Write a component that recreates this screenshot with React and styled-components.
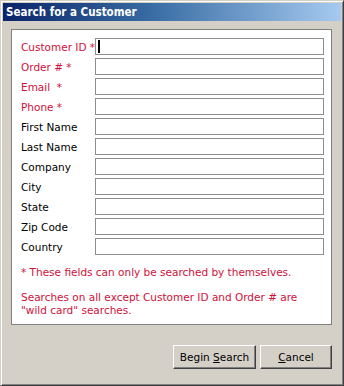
import React from "react";
import styled, { createGlobalStyle } from "styled-components";

const GlobalStyle = createGlobalStyle`
  html, body { margin: 0; padding: 0; background: #d4d0c8; }
  body { font-family: "DejaVu Sans", Verdana, sans-serif; }
`;

const Window = styled.div`
  box-sizing: border-box;
  width: 344px;
  height: 386px;
  background: #d4d0c8;
  border: 1px solid;
  border-color: #d4d0c8 #404040 #404040 #d4d0c8;
  box-shadow: inset 1px 1px 0 #ffffff, inset -1px -1px 0 #808080;
  padding: 2px;
  display: flex;
  flex-direction: column;
`;

const TitleBar = styled.div`
  height: 18px;
  display: flex;
  align-items: center;
  padding-left: 3px;
  background: linear-gradient(to right, #0a246a 0%, #3a6ea5 45%, #a6caf0 100%);
  color: #ffffff;
  font-family: "DejaVu Sans Condensed", "DejaVu Sans", sans-serif;
  font-stretch: condensed;
  font-weight: bold;
  font-size: 11.5px;
`;

const Body = styled.div`
  flex: 1;
  display: flex;
  flex-direction: column;
  padding: 8px 9px 0 8px;
`;

const Panel = styled.div`
  box-sizing: border-box;
  height: 296px;
  background: #ffffff;
  border: 1px solid #808080;
  padding: 8px 7px 0 9px;
  display: flex;
  flex-direction: column;
`;

const FieldList = styled.div`
  display: flex;
  flex-direction: column;
  gap: 3px;
`;

const Row = styled.div`
  display: grid;
  grid-template-columns: 74px 1fr;
  align-items: center;
  height: 17px;
`;

const Label = styled.span`
  font-size: 10.5px;
  color: ${(p) => (p.required ? "#d0103a" : "#000000")};
  white-space: pre;
`;

const InputBox = styled.div`
  position: relative;
  box-sizing: border-box;
  height: 17px;
  border: 1px solid #8c8c8c;
  background: #ffffff;
`;

const Caret = styled.span`
  position: absolute;
  left: 2px;
  top: 1px;
  width: 2px;
  height: 13px;
  background: #000000;
`;

const Note = styled.p`
  margin: ${(p) => p.top}px 0 0 0;
  font-size: 10.5px;
  line-height: 13px;
  color: #d0103a;
`;

const ButtonBar = styled.div`
  display: flex;
  justify-content: flex-end;
  gap: 4px;
  padding-top: 20px;
`;

const Button = styled.button`
  box-sizing: border-box;
  width: ${(p) => p.w}px;
  height: 24px;
  background: #d4d0c8;
  font-family: "DejaVu Sans", Verdana, sans-serif;
  font-size: 10.5px;
  color: #000000;
  padding: 0;
  border: 1px solid;
  border-color: #ffffff #404040 #404040 #ffffff;
  box-shadow: inset -1px -1px 0 #808080;
  u { text-decoration: underline; }
`;

const fields = [
  { label: "Customer ID *", required: true, caret: true },
  { label: "Order # *", required: true },
  { label: "Email  *", required: true },
  { label: "Phone *", required: true },
  { label: "First Name" },
  { label: "Last Name" },
  { label: "Company" },
  { label: "City" },
  { label: "State" },
  { label: "Zip Code" },
  { label: "Country" },
];

export default function App() {
  return (
    <>
      <GlobalStyle />
      <Window>
        <TitleBar>Search for a Customer</TitleBar>
        <Body>
          <Panel>
            <FieldList>
              {fields.map((f) => (
                <Row key={f.label}>
                  <Label required={f.required}>{f.label}</Label>
                  <InputBox>{f.caret && <Caret />}</InputBox>
                </Row>
              ))}
            </FieldList>
            <Note top={11}>* These fields can only be searched by themselves.</Note>
            <Note top={12}>
              Searches on all except Customer ID and Order # are "wild card" searches.
            </Note>
          </Panel>
          <ButtonBar>
            <Button w={83}>
              Begin <u>S</u>earch
            </Button>
            <Button w={72}>
              <u>C</u>ancel
            </Button>
          </ButtonBar>
        </Body>
      </Window>
    </>
  );
}
